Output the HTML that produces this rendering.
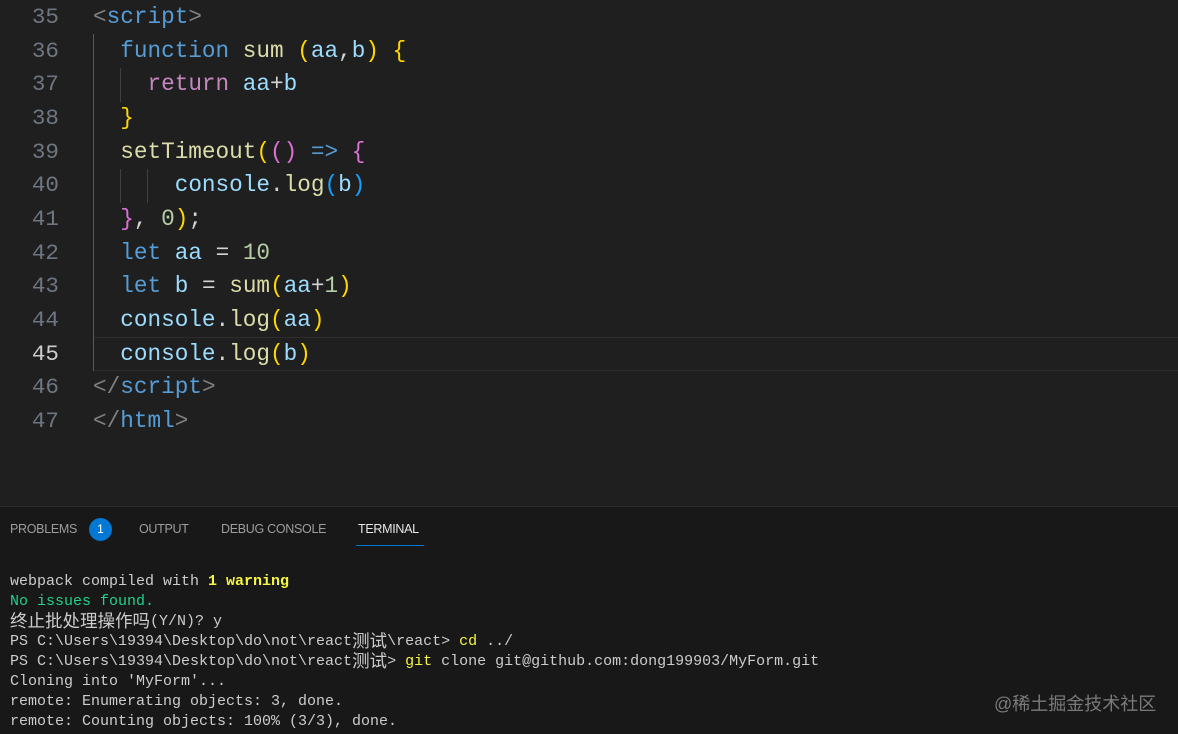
<!DOCTYPE html>
<html><head><meta charset="utf-8"><style>
*{margin:0;padding:0;box-sizing:border-box}
body{width:1178px;height:734px;background:#1f1f1f;overflow:hidden;position:relative;font-family:"Liberation Mono",monospace}
.ln{position:absolute;left:0;width:59px;text-align:right;color:#6e7681;font-size:22.6px;height:34px;line-height:34px}
.cd{position:absolute;left:93px;font-size:22.7px;height:34px;line-height:34px;white-space:pre;color:#d4d4d4}
.g{position:absolute;width:1px;background:#404040}
.tag{color:#808080}.tn{color:#569cd6}.kw{color:#569cd6}.fn{color:#dcdcaa}.v{color:#9cdcfe}.p1{color:#ffd700}.p2{color:#da70d6}.p3{color:#179fff}.ret{color:#c586c0}.num{color:#b5cea8}
#panel{position:absolute;left:0;top:506px;width:1178px;height:228px;background:#181818;border-top:1px solid #2b2b2b}
.tab{position:absolute;top:15px;font-family:"Liberation Sans",sans-serif;font-size:12.5px;color:#9d9d9d;letter-spacing:-0.3px}
.t{position:absolute;left:10px;font-size:15px;line-height:20px;height:20px;white-space:pre;color:#cccccc;font-family:"Liberation Mono",monospace}
.c{display:inline-block;font-family:"Noto Sans CJK SC",sans-serif;font-size:17.5px;line-height:20px;height:20px;vertical-align:top;position:relative;top:-1px}
</style></head><body>
<div style="position:absolute;left:93px;top:337px;width:1085px;height:34px;border-top:1px solid #2c2c2c;border-bottom:1px solid #2c2c2c"></div>
<div class="g" style="left:93px;top:34px;height:337px;background:#585858"></div>
<div class="g" style="left:120px;top:68px;height:34px"></div>
<div class="g" style="left:120px;top:169px;height:34px"></div>
<div class="g" style="left:147px;top:169px;height:34px"></div>

<div class="ln" style="top:0px">35</div><div class="cd" style="top:0px"><span class="tag">&lt;</span><span class="tn">script</span><span class="tag">&gt;</span></div>
<div class="ln" style="top:34px">36</div><div class="cd" style="top:34px">  <span class="kw">function</span> <span class="fn">sum</span> <span class="p1">(</span><span class="v">aa</span>,<span class="v">b</span><span class="p1">)</span> <span class="p1">{</span></div>
<div class="ln" style="top:67px">37</div><div class="cd" style="top:67px">    <span class="ret">return</span> <span class="v">aa</span>+<span class="v">b</span></div>
<div class="ln" style="top:101px">38</div><div class="cd" style="top:101px">  <span class="p1">}</span></div>
<div class="ln" style="top:135px">39</div><div class="cd" style="top:135px">  <span class="fn">setTimeout</span><span class="p1">(</span><span class="p2">()</span> <span class="kw">=&gt;</span> <span class="p2">{</span></div>
<div class="ln" style="top:168px">40</div><div class="cd" style="top:168px">      <span class="v">console</span>.<span class="fn">log</span><span class="p3">(</span><span class="v">b</span><span class="p3">)</span></div>
<div class="ln" style="top:202px">41</div><div class="cd" style="top:202px">  <span class="p2">}</span>, <span class="num">0</span><span class="p1">)</span>;</div>
<div class="ln" style="top:236px">42</div><div class="cd" style="top:236px">  <span class="kw">let</span> <span class="v">aa</span> = <span class="num">10</span></div>
<div class="ln" style="top:269px">43</div><div class="cd" style="top:269px">  <span class="kw">let</span> <span class="v">b</span> = <span class="fn">sum</span><span class="p1">(</span><span class="v">aa</span>+<span class="num">1</span><span class="p1">)</span></div>
<div class="ln" style="top:303px">44</div><div class="cd" style="top:303px">  <span class="v">console</span>.<span class="fn">log</span><span class="p1">(</span><span class="v">aa</span><span class="p1">)</span></div>
<div class="ln" style="top:337px;color:#cccccc">45</div><div class="cd" style="top:337px">  <span class="v">console</span>.<span class="fn">log</span><span class="p1">(</span><span class="v">b</span><span class="p1">)</span></div>
<div class="ln" style="top:370px">46</div><div class="cd" style="top:370px"><span class="tag">&lt;/</span><span class="tn">script</span><span class="tag">&gt;</span></div>
<div class="ln" style="top:404px">47</div><div class="cd" style="top:404px"><span class="tag">&lt;/</span><span class="tn">html</span><span class="tag">&gt;</span></div>

<div id="panel">
<div class="tab" style="left:10px">PROBLEMS</div>
<div style="position:absolute;left:89px;top:11px;width:23px;height:23px;border-radius:50%;background:#0078d4;color:#fff;font-family:'Liberation Sans',sans-serif;font-size:12px;text-align:center;line-height:23px">1</div>
<div class="tab" style="left:139px">OUTPUT</div>
<div class="tab" style="left:221px">DEBUG CONSOLE</div>
<div class="tab" style="left:358px;color:#e7e7e7">TERMINAL</div>
<div style="position:absolute;left:356px;top:38px;width:68px;height:1px;background:#0078d4"></div>
<div class="t" style="top:65px">webpack compiled with <b style="color:#f5f543">1 warning</b></div>
<div class="t" style="top:85px;color:#23d18b">No issues found.</div>
<div class="t" style="top:105px"><span class="c">终止批处理操作吗</span>(Y/N)? y</div>
<div class="t" style="top:125px">PS C:\Users\19394\Desktop\do\not\react<span class="c">测试</span>\react&gt; <span style="color:#f5f543">cd</span> ../</div>
<div class="t" style="top:145px">PS C:\Users\19394\Desktop\do\not\react<span class="c">测试</span>&gt; <span style="color:#f5f543">git</span> clone git@github.com:dong199903/MyForm.git</div>
<div class="t" style="top:165px">Cloning into 'MyForm'...</div>
<div class="t" style="top:185px">remote: Enumerating objects: 3, done.</div>
<div class="t" style="top:205px">remote: Counting objects: 100% (3/3), done.</div>
<div style="position:absolute;left:994px;top:183px;font-family:'Liberation Sans','Noto Sans CJK SC',sans-serif;font-size:18px;color:#7a7a7a">@稀土掘金技术社区</div>
</div>
</body></html>
